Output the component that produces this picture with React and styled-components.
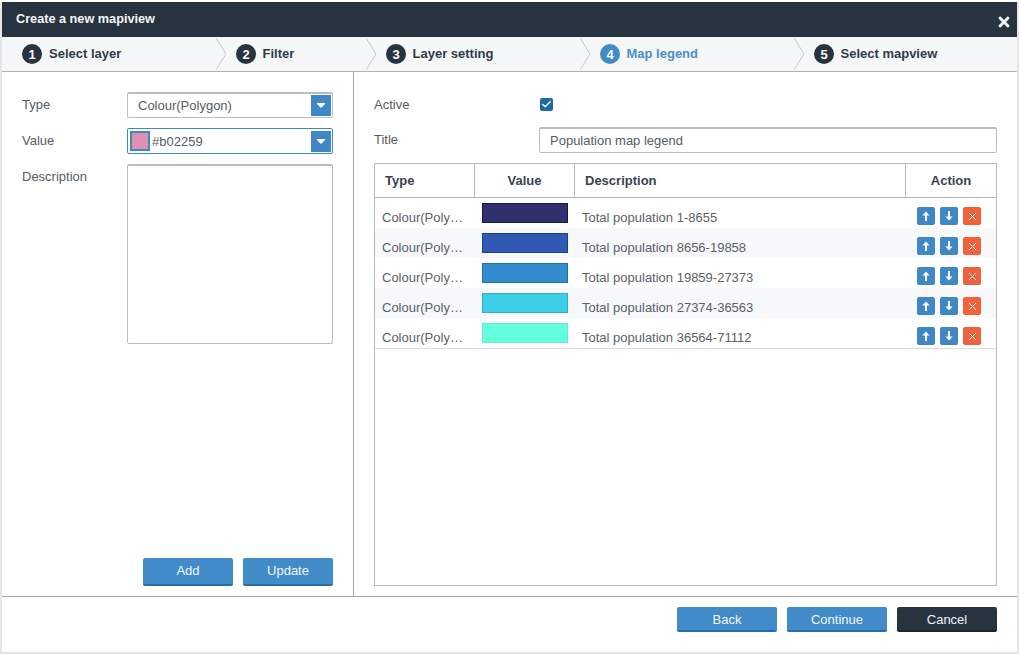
import React from "react";
import styled, { createGlobalStyle } from "styled-components";
import { X, Check } from "lucide-react";
import { FaTimes } from "react-icons/fa";

const Global = createGlobalStyle`
  html, body { margin: 0; padding: 0; background: #fff; }
  * { box-sizing: border-box; }
  body { font-family: "Liberation Sans", Arial, sans-serif; }
`;

const Dialog = styled.div`
  width: 1019px; height: 654px; margin: 0; padding-top: 2px;
  display: flex; flex-direction: column;
`;
const Frame = styled.div`
  flex: 1; min-height: 0; display: flex; flex-direction: column;
  border-left: 2px solid #e6e6e6; border-right: 2px solid #e6e6e6; border-bottom: 2px solid #e2e2e2;
  background: #fff;
`;
const Header = styled.div`
  height: 35px; flex: none; background: #27333f; color: #f4f7f8;
  display: flex; justify-content: space-between; align-items: flex-start;
  padding: 10px 5px 0 14px;
`;
const Title = styled.div`font-size: 12.7px; font-weight: 700; line-height: 15px;`;
const Close = styled(FaTimes)`color: #eef0f2; width: 16px; height: 16px; margin-top: 2px;`;
const Steps = styled.div`
  height: 35px; flex: none; background: #f5f7f9; border-bottom: 1px solid #b4b4b4;
  display: grid; grid-template-columns: 214px 150px 214px 214px 1fr;
`;
const Step = styled.div`
  display: flex; align-items: center; gap: ${p => (p.$first ? 7 : 6.5)}px;
  padding-left: ${p => (p.$first ? 20 : 0)}px;
  color: ${p => (p.$active ? "#4b8fc4" : "#2f3b48")};
  font-size: 13px; font-weight: 700;
`;
const StepLabel = styled.span`margin-bottom: 2px;`;
const Chevron = styled.svg`width: 10px; height: 34px; flex: none; margin-right: 3.5px;`;
const Badge = styled.span`
  width: 20px; height: 20px; border-radius: 50%; flex: none;
  background: ${p => (p.$active ? "#418bc8" : "#27333f")}; color: #fff;
  display: flex; align-items: center; justify-content: center;
  font-size: 13px; font-weight: 700;
`;
const Body = styled.div`
  flex: 1; min-height: 0; display: flex; border-bottom: 1px solid #a2a2a2;
`;
const LeftPanel = styled.div`
  width: 352px; flex: none; border-right: 1px solid #a2a2a2;
  padding: 20px 20px 10px; display: flex; flex-direction: column; gap: 10px;
`;
const RightPanel = styled.div`
  flex: 1; min-width: 0; padding: 20px 20px 10px; display: flex; flex-direction: column; gap: 10px;
`;
const FormRow = styled.div`
  display: grid; grid-template-columns: ${p => p.$label}px 1fr; align-items: ${p => (p.$top ? "start" : "center")};
  height: ${p => (p.$h ? `${p.$h}px` : "auto")};
`;
const Label = styled.div`
  font-size: 13px; color: #555c63; line-height: 24px; margin-top: ${p => p.$top || 0}px;
`;
const Select = styled.div`
  height: 26px; border: 1px solid ${p => (p.$focus ? "#3d8bbd" : "#bdbdbd")};
  border-top: ${p => (p.$focus ? "1px solid #3d8bbd" : "2px solid #bdbdbd")};
  border-radius: 2px; display: flex; align-items: center; justify-content: space-between;
  padding: 0 1px 0 ${p => (p.$focus ? 2 : 10)}px; background: #fff;
  font-size: 13px; color: #555c63;
`;
const SelectValue = styled.div`display: flex; align-items: center; gap: 2px;`;
const ColorChip = styled.span`
  width: 20px; height: 20px; background: #df90b2; border: 2px solid #3d8bbd; display: block;
`;
const Arrow = styled.span`
  width: 20px; height: 21px; background: #3f88c5; display: flex; align-items: center; justify-content: center;
  &::after {
    content: ""; border-left: 5px solid transparent; border-right: 5px solid transparent;
    border-top: 5px solid #fff; border-radius: 2px;
  }
`;
const TextArea = styled.textarea`
  display: block; width: 100%; height: 180px; resize: none; outline: none;
  border: 1px solid #bdbdbd; border-top: 2px solid #bdbdbd; border-radius: 2px; background: #fff;
`;
const ButtonRow = styled.div`
  margin-top: auto; display: flex; justify-content: flex-end; gap: 10px;
`;
const Button = styled.button`
  width: ${p => p.$w || 90}px; height: ${p => p.$h || 28}px; border: 0; border-radius: 2px;
  background: ${p => (p.$dark ? "#27333f" : "#418bc8")};
  border-bottom: 2px solid ${p => (p.$dark ? "#1b2530" : "#2a6ca6")};
  color: #f2f7fb; font: 13px "Liberation Sans", Arial, sans-serif;
  display: flex; align-items: center; justify-content: center;
  padding: ${p => (p.$h ? "1px 0 0" : "0 0 1px")};
`;
const CheckBox = styled.span`
  width: 13px; height: 13px; border-radius: 2px; background: #1e6aa5; color: #fff;
  display: flex; align-items: center; justify-content: center; margin-left: 1px;
`;
const TitleInput = styled.input`
  width: 100%; height: 26px; border: 1px solid #bdbdbd; border-top: 2px solid #bdbdbd; border-radius: 2px;
  padding: 0 10px; outline: none; font: 13px "Liberation Sans", Arial, sans-serif; color: #555c63;
`;
const Table = styled.div`
  flex: 1; min-height: 0; border: 1px solid #b9b9b9; display: flex; flex-direction: column;
`;
const Columns = `grid-template-columns: 100px 100px 331px 1fr;`;
const HeadRow = styled.div`
  display: grid; ${Columns} height: 34px; flex: none; border-bottom: 1px solid #b9b9b9;
`;
const HeadCell = styled.div`
  display: flex; align-items: center; font-size: 13px; font-weight: 700; color: #39434f;
  justify-content: ${p => (p.$center ? "center" : "flex-start")};
  padding-left: ${p => (p.$center ? 0 : 10)}px;
  border-right: ${p => (p.$last ? "none" : "1px solid #b9b9b9")};
`;
const Rows = styled.div`border-bottom: 1px solid #dcdcdc;`;
const Row = styled.div`
  display: grid; ${Columns} height: 30px;
  background: ${p => (p.$odd ? "#f6f8f9" : "#fff")};
`;
const TextCell = styled.div`
  font-size: 13px; color: #5a6168; line-height: 16px; padding: 12px 10px 0 7px;
  white-space: nowrap; overflow: hidden; text-overflow: ellipsis;
`;
const SwatchCell = styled.div`padding: 5px 7px 0;`;
const Swatch = styled.div`
  width: 86px; height: 20px; background: ${p => p.$c}; border: 1px solid ${p => p.$b};
`;
const ActionCell = styled.div`display: flex; gap: 5px; padding: 9px 0 0 11px;`;
const IconButton = styled.span`
  width: 18px; height: 18px; border-radius: 2px; color: #fff;
  background: ${p => (p.$red ? "#ef623b" : "#3f88c5")};
  display: flex; align-items: center; justify-content: center;
`;
const ArrowIcon = styled.svg`
  width: 12px; height: 12px; fill: #fff;
  transform: ${p => (p.$down ? "rotate(180deg)" : "none")};
`;
const Footer = styled.div`
  flex: none; height: 55px; display: flex; justify-content: flex-end; gap: 10px; padding: 10px 20px 0;
`;

const steps = [
  { label: "Select layer" },
  { label: "Filter" },
  { label: "Layer setting" },
  { label: "Map legend", active: true },
  { label: "Select mapview" },
];
const legend = [
  { c: "#30306f", b: "#15154f", t: "Total population 1-8655" },
  { c: "#3158b4", b: "#1c3f8d", t: "Total population 8656-19858" },
  { c: "#338cd0", b: "#1f72a6", t: "Total population 19859-27373" },
  { c: "#3dcde6", b: "#2fafc9", t: "Total population 27374-36563" },
  { c: "#65ffe0", b: "#62ecd4", t: "Total population 36564-71112" },
];
const arrowPath = "M6 1.5 L9.6 5.6 H7 V11 H5 V5.6 H2.4 Z";

export default function App() {
  return (
    <Dialog>
      <Global />
      <Frame>
        <Header>
          <Title>Create a new mapiview</Title>
          <Close />
        </Header>
        <Steps>
          {steps.map((s, i) => (
            <Step key={s.label} $first={i === 0} $active={s.active}>
              {i > 0 && (
                <Chevron viewBox="0 0 10 34">
                  <path d="M0 1 L10 17 L0 33" fill="none" stroke="#c6c8ca" strokeWidth="1" />
                </Chevron>
              )}
              <Badge $active={s.active}>{i + 1}</Badge>
              <StepLabel>{s.label}</StepLabel>
            </Step>
          ))}
        </Steps>
        <Body>
          <LeftPanel>
            <FormRow $label={105}>
              <Label>Type</Label>
              <Select>
                Colour(Polygon)
                <Arrow />
              </Select>
            </FormRow>
            <FormRow $label={105}>
              <Label>Value</Label>
              <Select $focus>
                <SelectValue><ColorChip />#b02259</SelectValue>
                <Arrow />
              </Select>
            </FormRow>
            <FormRow $label={105} $top>
              <Label $top={1}>Description</Label>
              <TextArea />
            </FormRow>
            <ButtonRow>
              <Button>Add</Button>
              <Button>Update</Button>
            </ButtonRow>
          </LeftPanel>
          <RightPanel>
            <FormRow $label={165} $h={25}>
              <Label>Active</Label>
              <CheckBox><Check size={11} strokeWidth={3} /></CheckBox>
            </FormRow>
            <FormRow $label={165}>
              <Label>Title</Label>
              <TitleInput readOnly value="Population map legend" />
            </FormRow>
            <Table>
              <HeadRow>
                <HeadCell>Type</HeadCell>
                <HeadCell $center>Value</HeadCell>
                <HeadCell>Description</HeadCell>
                <HeadCell $center $last>Action</HeadCell>
              </HeadRow>
              <Rows>
                {legend.map((r, i) => (
                  <Row key={r.t} $odd={i % 2 === 1}>
                    <TextCell>Colour(Polygon)</TextCell>
                    <SwatchCell><Swatch $c={r.c} $b={r.b} /></SwatchCell>
                    <TextCell>{r.t}</TextCell>
                    <ActionCell>
                      <IconButton><ArrowIcon viewBox="0 0 12 12"><path d={arrowPath} /></ArrowIcon></IconButton>
                      <IconButton><ArrowIcon $down viewBox="0 0 12 12"><path d={arrowPath} /></ArrowIcon></IconButton>
                      <IconButton $red><X size={13} strokeWidth={1.75} /></IconButton>
                    </ActionCell>
                  </Row>
                ))}
              </Rows>
            </Table>
          </RightPanel>
        </Body>
        <Footer>
          <Button $w={100} $h={25}>Back</Button>
          <Button $w={100} $h={25}>Continue</Button>
          <Button $w={100} $h={25} $dark>Cancel</Button>
        </Footer>
      </Frame>
    </Dialog>
  );
}
